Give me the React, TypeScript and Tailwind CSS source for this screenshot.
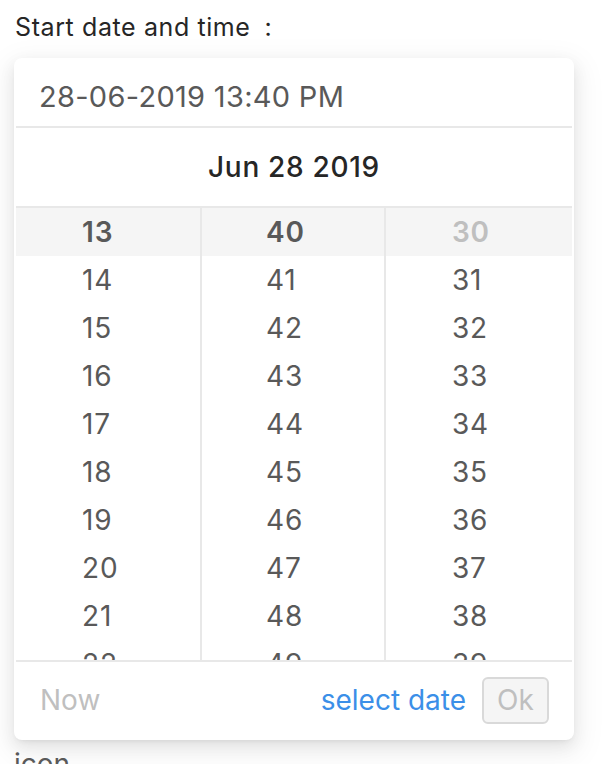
import React from "react";

const hours = [13, 14, 15, 16, 17, 18, 19, 20, 21, 22];
const mins = [40, 41, 42, 43, 44, 45, 46, 47, 48, 49];
const secs = [30, 31, 32, 33, 34, 35, 36, 37, 38, 39];

function Column({ items, widthClass, padClass, firstDisabled }: { items: number[]; widthClass: string; padClass: string; firstDisabled?: boolean }) {
  return (
    <div className={`${widthClass} flex flex-col`}>
      {items.map((n, i) => (
        <div
          key={n}
          className={
            i === 0
              ? `h-[48px] shrink-0 flex items-center ${padClass} bg-[#f5f5f5] font-semibold ${firstDisabled ? "text-[#bfbfbf]" : "text-[#595959]"}`
              : `h-[48px] shrink-0 flex items-center ${padClass} text-[#595959]`
          }
        >
          {n}
        </div>
      ))}
    </div>
  );
}

export default function App() {
  return (
    <div
      className="w-[602px] h-[764px] overflow-hidden bg-white"
      style={{ fontFamily: "Inter, 'Liberation Sans', sans-serif" }}
    >
      <div className="pl-[15px] pt-[9px] h-[58px] text-[25px] tracking-[0.6px] leading-[36px] text-[#262626]">
        Start date and time<span className="ml-[14px]">:</span>
      </div>
      <div className="ml-[14px] w-[560px] rounded-[8px] bg-white p-[2px] shadow-[0_3px_6px_-4px_rgba(0,0,0,0.12),0_6px_16px_0_rgba(0,0,0,0.08),0_9px_28px_8px_rgba(0,0,0,0.05)]">
        <div className="h-[68px] border-b-2 border-[#e8e8e8] flex items-center pt-[8px] pl-[23px] text-[29px] tracking-[0.3px] text-[#595959]">
          28-06-2019 13:40 PM
        </div>
        <div className="h-[80px] border-b-2 border-[#e8e8e8] flex items-center justify-center text-[28px] tracking-[0.7px] font-medium text-[#262626]">
          Jun 28 2019
        </div>
        <div className="h-[452px] overflow-hidden flex text-[28px] tracking-[0.8px]">
          <Column items={hours} widthClass="w-[184px]" padClass="pl-[66px]" />
          <div className="w-[2px] bg-[#e8e8e8] shrink-0" />
          <Column items={mins} widthClass="w-[182px]" padClass="pl-[64px]" />
          <div className="w-[2px] bg-[#e8e8e8] shrink-0" />
          <Column items={secs} widthClass="flex-1" padClass="pl-[66px]" firstDisabled />
        </div>
        <div className="h-[78px] border-t-2 border-[#e8e8e8] flex items-center pl-[24px] pr-[23px] text-[28px]">
          <span className="text-[#bfbfbf]">Now</span>
          <span className="ml-auto text-[#3b8fe8]">select date</span>
          <span className="ml-[16px] w-[67px] h-[47px] rounded-[6px] border-2 border-[#d9d9d9] bg-[#f5f5f5] text-[#bfbfbf] flex items-center justify-center">
            Ok
          </span>
        </div>
      </div>
      <div className="pl-[14px] pt-[4px] text-[28px] leading-[40px] text-[#595959]">icon</div>
    </div>
  );
}
